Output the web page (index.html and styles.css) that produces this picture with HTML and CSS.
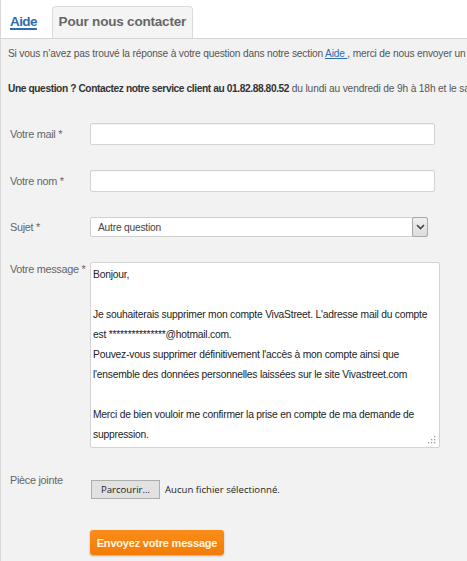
FILE: index.html
```html
<!DOCTYPE html>
<html lang="fr">
<head>
<meta charset="utf-8">
<title>Pour nous contacter</title>
<link rel="stylesheet" href="styles.css">
</head>
<body>
<div class="page">
  <div class="tabs">
    <a class="tab-link" href="#">Aide</a>
    <div class="tab-active">Pour nous contacter</div>
  </div>
  <div class="content">
    <p class="intro">Si vous n’avez pas trouvé la réponse à votre question dans notre section <a href="#">Aide </a>, merci de nous envoyer un message</p>
    <p class="hotline"><b>Une question ? Contactez notre service client au 01.82.88.80.52</b> du lundi au vendredi de 9h à 18h et le samedi</p>

    <form class="form">
      <div class="row row-input">
        <label class="lbl">Votre mail *</label>
        <div class="field input"></div>
      </div>
      <div class="row row-input">
        <label class="lbl">Votre nom *</label>
        <div class="field input"></div>
      </div>
      <div class="row row-select">
        <label class="lbl">Sujet *</label>
        <div class="field select">
          <span class="select-value">Autre question</span>
          <span class="select-btn">
            <svg width="9" height="6" viewBox="0 0 9 6"><path d="M1 1 L4.5 4.5 L8 1" fill="none" stroke="#444" stroke-width="1.6"/></svg>
          </span>
        </div>
      </div>
      <div class="row row-message">
        <label class="lbl">Votre message *</label>
        <div class="field textarea">
          <div class="ta-line">Bonjour,</div>
          <div class="ta-line">&nbsp;</div>
          <div class="ta-line">Je souhaiterais supprimer mon compte VivaStreet. L'adresse mail du compte</div>
          <div class="ta-line">est ***************@hotmail.com.</div>
          <div class="ta-line">Pouvez-vous supprimer définitivement l'accès à mon compte ainsi que</div>
          <div class="ta-line">l'ensemble des données personnelles laissées sur le site Vivastreet.com</div>
          <div class="ta-line">&nbsp;</div>
          <div class="ta-line">Merci de bien vouloir me confirmer la prise en compte de ma demande de</div>
          <div class="ta-line">suppression.</div>
          <svg class="grip" width="8" height="8" viewBox="0 0 8 8">
            <rect x="6" y="0" width="1.3" height="1.3" fill="#9a9a9a"/>
            <rect x="3" y="3" width="1.3" height="1.3" fill="#9a9a9a"/>
            <rect x="6" y="3" width="1.3" height="1.3" fill="#9a9a9a"/>
            <rect x="0" y="6" width="1.3" height="1.3" fill="#9a9a9a"/>
            <rect x="3" y="6" width="1.3" height="1.3" fill="#9a9a9a"/>
            <rect x="6" y="6" width="1.3" height="1.3" fill="#9a9a9a"/>
          </svg>
        </div>
      </div>
      <div class="row row-file">
        <label class="lbl">Pièce jointe</label>
        <div class="file">
          <button type="button" class="file-btn">Parcourir...</button>
          <span class="file-name">Aucun fichier sélectionné.</span>
        </div>
      </div>
      <div class="submit-row">
        <button type="button" class="submit">Envoyez votre message</button>
      </div>
    </form>
  </div>
</div>
</body>
</html>
```
FILE: styles.css
```css
html, body {
  margin: 0;
  padding: 0;
  background: #ffffff;
}
body {
  font-family: "Liberation Sans", Arial, sans-serif;
  color: #555;
  overflow: hidden;
}
.page {
  width: 467px;
  height: 561px;
  border-left: 1px solid #d9d9d9;
  box-sizing: border-box;
  display: flex;
  flex-direction: column;
}
.tabs {
  height: 39px;
  flex: none;
  display: flex;
  align-items: flex-end;
  padding-left: 9px;
  border-bottom: 1px solid #d5d5d5;
  background: #fff;
  box-sizing: border-box;
}
.tab-link {
  font-size: 13.5px;
  font-weight: bold;
  color: #2f6bb0;
  text-decoration: underline;
  text-decoration-thickness: 2px;
  text-underline-offset: 2px;
  margin-bottom: 9px;
  letter-spacing: -0.6px;
}
.tab-active {
  margin-left: 15px;
  width: 141px;
  height: 32px;
  box-sizing: border-box;
  border: 1px solid #dadada;
  border-bottom: none;
  border-radius: 4px 4px 0 0;
  background: #f4f4f4;
  font-size: 13.5px;
  font-weight: bold;
  color: #666;
  text-align: center;
  line-height: 30px;
  letter-spacing: -0.2px;
}
.content {
  flex: 1;
  background: #f2f2f2;
  padding: 0 0 0 7px;
  overflow: hidden;
}
.intro {
  margin: 8px 0 0;
  font-size: 10.2px;
  line-height: 14px;
  white-space: nowrap;
  color: #555;
  letter-spacing: -0.18px;
}
.intro a {
  color: #2f6bb0;
}
.hotline {
  margin: 21px 0 0;
  font-size: 10.2px;
  line-height: 14px;
  white-space: nowrap;
  color: #555;
  letter-spacing: -0.15px;
}
.hotline b {
  color: #333;
  letter-spacing: -0.4px;
}
.form {
  margin-top: 27px;
}
.row {
  display: flex;
  margin-bottom: 25px;
}
.lbl {
  width: 82px;
  flex: none;
  box-sizing: border-box;
  font-size: 10.9px;
  color: #666;
  letter-spacing: -0.3px;
  padding-left: 2px;
}
.row-input, .row-select {
  align-items: center;
}
.input {
  width: 345px;
  height: 22px;
  box-sizing: border-box;
  background: #fff;
  border: 1px solid #d3d3d3;
  border-radius: 2px;
  box-shadow: inset 0 1px 1px rgba(0,0,0,0.05);
}
.select {
  width: 338px;
  height: 20px;
  box-sizing: border-box;
  background: #fff;
  border: 1px solid #cfcfcf;
  border-radius: 2px;
  display: flex;
  align-items: center;
  justify-content: space-between;
}
.select-value {
  font-size: 10.2px;
  color: #444;
  padding-left: 7px;
  letter-spacing: -0.2px;
}
.select-btn {
  width: 16px;
  height: 20px;
  margin-right: -1px;
  box-sizing: border-box;
  border: 1px solid #a9a9a9;
  border-radius: 2px;
  background: linear-gradient(#f0f0f0, #dcdcdc);
  display: flex;
  align-items: center;
  justify-content: center;
}
.row-message {
  align-items: flex-start;
}
.row-message .lbl {
  margin-top: 1px;
}
.textarea {
  position: relative;
  width: 350px;
  height: 186px;
  box-sizing: border-box;
  background: #fff;
  border: 1px solid #d3d3d3;
  border-radius: 2px;
  padding: 2px 0 0 2px;
  font-size: 10.3px;
  line-height: 20px;
  color: #222;
  letter-spacing: -0.22px;
  white-space: nowrap;
}
.grip {
  position: absolute;
  right: 3px;
  bottom: 3px;
}
.row-file {
  align-items: flex-start;
  margin-top: 26px;
  margin-bottom: 31px;
}
.file {
  display: flex;
  align-items: center;
  padding-top: 6px;
}
.file-btn {
  height: 19px;
  width: 69px;
  margin: 0 0 0 1px;
  padding: 0;
  box-sizing: border-box;
  border: 1px solid #adadad;
  background: #e1e1e1;
  font-family: "Open Sans", "Noto Sans", sans-serif;
  font-size: 9.6px;
  color: #222;
}
.file-name {
  margin-left: 5px;
  font-family: "Open Sans", "Noto Sans", sans-serif;
  font-size: 9.6px;
  color: #222;
}
.submit-row {
  padding-left: 82px;
}
.submit {
  width: 134px;
  height: 25px;
  border: none;
  border-radius: 3px;
  background: linear-gradient(#fa8d1c, #f47c05);
  box-shadow: 0 1px 2px rgba(0,0,0,0.3);
  color: #fff6e4;
  font-family: "Liberation Sans", Arial, sans-serif;
  font-weight: bold;
  font-size: 11px;
  letter-spacing: -0.2px;
  padding: 0;
}
```
